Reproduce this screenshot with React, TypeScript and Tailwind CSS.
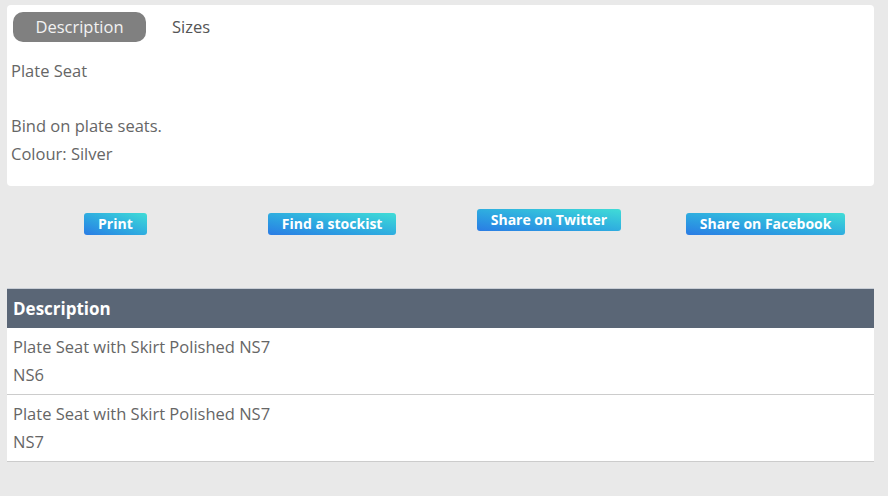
import React from 'react';

const rows = [
  { name: 'Plate Seat with Skirt Polished NS7', code: 'NS6' },
  { name: 'Plate Seat with Skirt Polished NS7', code: 'NS7' },
];

// gradient action buttons
function ActionButton({ label, className = '' }: { label: string; className?: string }) {
  return (
    <button
      className={`h-[22px] px-[14px] rounded-[3px] bg-gradient-to-tr from-[#2b7be4] to-[#41dcd6] text-white text-[14px] font-bold leading-[22px] ${className}`}
    >
      {label}
    </button>
  );
}

export default function App() {
  return (
    <div
      className="w-[888px] h-[496px] bg-[#e9e9e9] pt-[5px] px-[7px] overflow-hidden"
      style={{ fontFamily: '"Open Sans", sans-serif' }}
    >
      {/* tabs + description card */}
      <div className="w-[867px] h-[181px] bg-white rounded-[4px] px-[6px] pt-[7px]">
        <div className="flex items-center">
          <div className="h-[30px] w-[133px] rounded-[10px] bg-[#808080] text-[#f2f2f2] text-[16.5px] flex items-center justify-center">
            Description
          </div>
          <div className="ml-[26px] text-[16.5px] text-[#555]">Sizes</div>
        </div>
        <div className="mt-[15px] -ml-[2px] text-[16.5px] leading-[27.5px] text-[#666]">
          <p>Plate Seat</p>
          <p>&nbsp;</p>
          <p>Bind on plate seats.</p>
          <p>Colour: Silver</p>
        </div>
      </div>

      {/* buttons */}
      <div className="w-[867px] grid grid-cols-4 mt-[27px] h-[26px]">
        <div className="flex justify-center items-start">
          <ActionButton label="Print" />
        </div>
        <div className="flex justify-center items-start">
          <ActionButton label="Find a stockist" />
        </div>
        <div className="flex justify-center items-start">
          <ActionButton label="Share on Twitter" className="-mt-[4px]" />
        </div>
        <div className="flex justify-center items-start">
          <ActionButton label="Share on Facebook" />
        </div>
      </div>

      {/* sizes table */}
      <div className="w-[867px] mt-[49px]">
        <div className="h-[40px] bg-[#5a6676] border-t border-[#c9ced6] px-[6px] flex items-center text-white text-[17px] font-bold">
          Description
        </div>
        {rows.map((r, i) => (
          <div key={i} className="bg-white border-b border-[#cccccc] px-[6px] pt-[5px] pb-[5px] text-[16.5px] leading-[28px] text-[#666]">
            <div>{r.name}</div>
            <div>{r.code}</div>
          </div>
        ))}
      </div>
    </div>
  );
}
